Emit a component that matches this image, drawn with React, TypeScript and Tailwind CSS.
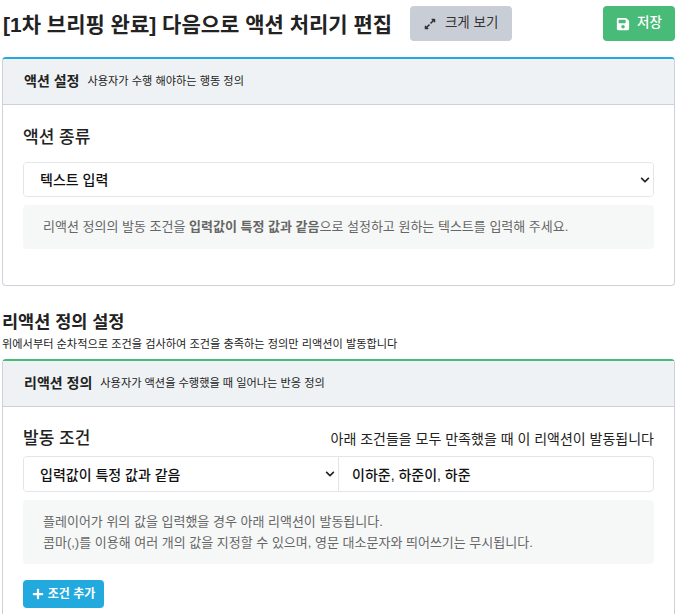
import { FaExpandAlt, FaSave, FaPlus, FaChevronDown } from 'react-icons/fa';

const FONT = "font-['Liberation_Sans','Noto_Sans_CJK_KR',sans-serif]";

function SelectBox({ value, className }: { value: string; className: string }) {
  return (
    <div className={`relative ${className}`}>
      <select
        defaultValue={value}
        className="w-full h-full appearance-none bg-white pl-[16px] pr-6 pt-[2px] text-[14px] font-medium text-[#111] outline-none"
      >
        <option>{value}</option>
      </select>
      <FaChevronDown size={10} className="absolute right-[3px] top-[12px] text-[#222]" />
    </div>
  );
}

function CardHeader({ title, desc }: { title: string; desc: string }) {
  return (
    <div className="flex items-center h-[46px] px-[21px] bg-[#eff2f5] border-b border-[#cdd1d8]">
      <span className="text-[14px] font-bold text-[#222] mr-[8px]">{title}</span>
      <span className="text-[11.2px] text-[#222]">{desc}</span>
    </div>
  );
}

export default function App() {
  return (
    <div className={`${FONT} h-[614px] w-[680px] overflow-hidden bg-white px-[2px]`}>
      <div className="flex items-center h-[57px] pb-[10px]">
        <h1 className="text-[21px] font-semibold text-[#222] ml-[1px] pt-[2px] whitespace-nowrap">
          [1차 브리핑 완료] 다음으로 액션 처리기 편집
        </h1>
        <button className="ml-[18px] flex items-center justify-center gap-[9px] w-[102px] h-[35px] rounded bg-[#c9ced6] text-[13.5px] text-[#333]">
          <FaExpandAlt size={12} />
          크게 보기
        </button>
        <button className="ml-auto mr-[3px] flex items-center justify-center gap-[7px] w-[72px] h-[35px] rounded bg-[#48bb78] text-[13.5px] font-medium text-white">
          <FaSave size={14} />
          저장
        </button>
      </div>

      <div className="w-[673px] h-[229px] rounded border border-[#cdd1d8] border-t-2 border-t-[#22a9dd] overflow-hidden">
        <CardHeader title="액션 설정" desc="사용자가 수행 해야하는 행동 정의" />
        <div className="px-[20px] pt-[20px]">
          <div className="text-[17px] font-medium text-[#222] leading-[26px]">액션 종류</div>
          <div className="mt-[11px] h-[35px] rounded border border-[#e2e5e9] overflow-hidden">
            <SelectBox value="텍스트 입력" className="h-full" />
          </div>
          <div className="mt-[8px] h-[44px] flex items-center rounded bg-[#f6f8f8] px-[20px] text-[13px] text-[#666]">
            <p>
              리액션 정의의 발동 조건을 <b className="font-bold">입력값이 특정 값과 같음</b>으로 설정하고 원하는 텍스트를 입력해 주세요.
            </p>
          </div>
        </div>
      </div>

      <div className="mt-[24px] h-[49px]">
        <h2 className="text-[17.5px] font-bold text-[#222] leading-[24px]">리액션 정의 설정</h2>
        <p className="text-[11.2px] text-[#222] leading-[16px] mt-[2px]">
          위에서부터 순차적으로 조건을 검사하여 조건을 충족하는 정의만 리액션이 발동합니다
        </p>
      </div>

      <div className="w-[673px] h-[300px] rounded-t border border-[#cdd1d8] border-t-2 border-t-[#48bb78]">
        <CardHeader title="리액션 정의" desc="사용자가 액션을 수행했을 때 일어나는 반응 정의" />
        <div className="px-[20px] pt-[19px]">
          <div className="flex items-center justify-between h-[26px]">
            <span className="text-[17px] font-medium text-[#222]">발동 조건</span>
            <span className="text-[14px] text-[#222]">아래 조건들을 모두 만족했을 때 이 리액션이 발동됩니다</span>
          </div>
          <div className="mt-[4px] flex h-[36px] rounded border border-[#e2e5e9] overflow-hidden">
            <SelectBox value="입력값이 특정 값과 같음" className="w-[315px] h-full border-r border-[#e2e5e9]" />
            <input
              defaultValue="이하준, 하준이, 하준"
              className="flex-1 min-w-0 px-[13px] pt-[2px] text-[14px] font-medium text-[#111] outline-none"
            />
          </div>
          <div className="mt-[8px] h-[64px] flex items-center rounded bg-[#f6f8f8] px-[20px] text-[13px] leading-[21px] text-[#666]">
            <p>
              플레이어가 위의 값을 입력했을 경우 아래 리액션이 발동됩니다.
              <br />
              콤마(,)를 이용해 여러 개의 값을 지정할 수 있으며, 영문 대소문자와 띄어쓰기는 무시됩니다.
            </p>
          </div>
          <button className="mt-[16px] flex items-center justify-center gap-[4px] w-[81px] h-[28px] rounded bg-[#22a9dd] text-[12px] font-bold text-white">
            <FaPlus size={12} />
            조건 추가
          </button>
        </div>
      </div>
    </div>
  );
}
